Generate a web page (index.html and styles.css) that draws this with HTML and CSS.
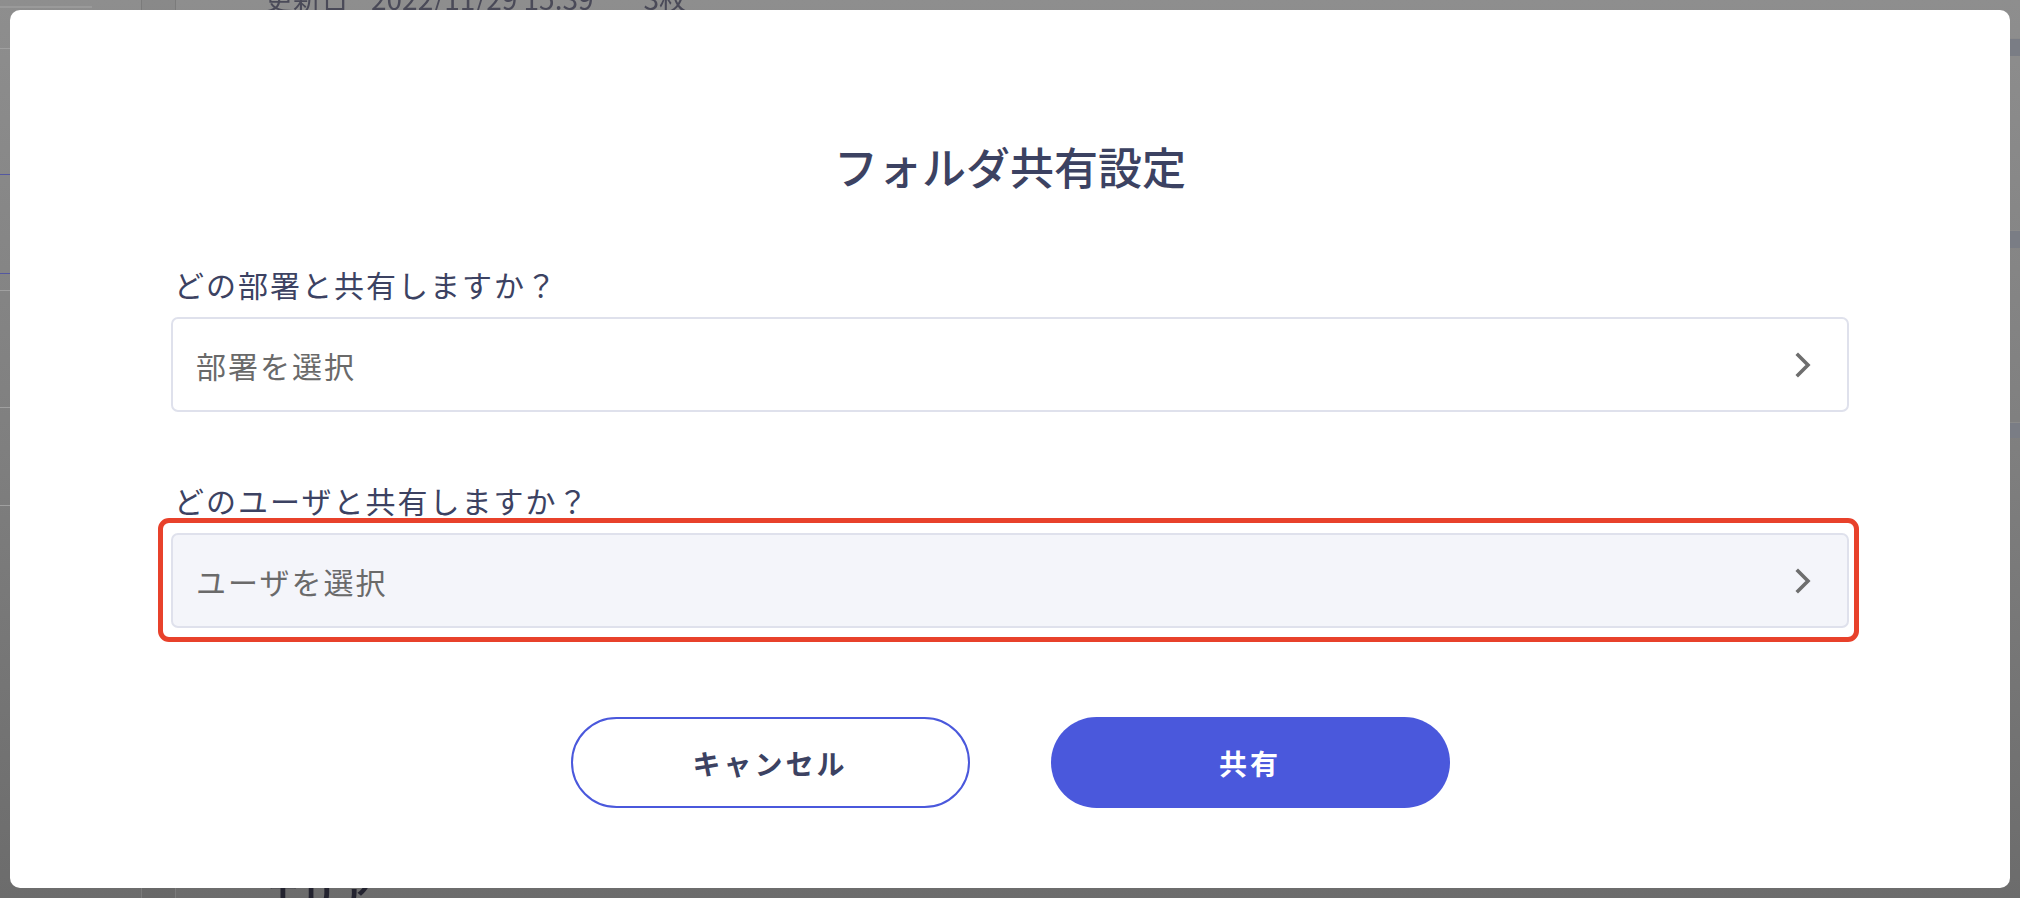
FILE: index.html
```html
<!DOCTYPE html>
<html lang="ja">
<head>
<meta charset="utf-8">
<title>フォルダ共有設定</title>
<link rel="stylesheet" href="styles.css">
</head>
<body>
<div class="page">
  <div class="page-col"></div>
  <div class="page-topline"></div>
  <div class="page-meta"><span>更新日</span><span>2022/11/29 15:39</span><span>3枚</span></div>
  <div class="page-side">
    <span class="side-band b1"></span>
    <span class="side-band b2"></span>
    <span class="side-band b3"></span>
  </div>
  <div class="page-left">
    <span class="left-line l1"></span>
    <span class="left-line l2 blue"></span>
    <span class="left-line l3 blue"></span>
    <span class="left-line l4"></span>
    <span class="left-line l5"></span>
    <span class="left-line l6"></span>
  </div>
  <div class="page-bottom">エリア</div>
</div>

<div class="overlay">
  <div class="modal">
    <h1 class="modal-title">フォルダ共有設定</h1>

    <section class="field field-dept">
      <p class="field-label">どの部署と共有しますか？</p>
      <div class="select">
        <span class="select-text">部署を選択</span>
        <svg class="chevron" viewBox="0 0 16 26" width="16" height="26"><path d="M3 3 L13 13 L3 23" fill="none" stroke="#6e6e6e" stroke-width="3.6" stroke-linecap="square" stroke-linejoin="miter"/></svg>
      </div>
    </section>

    <section class="field field-user">
      <p class="field-label">どのユーザと共有しますか？</p>
      <div class="select-wrap">
        <div class="select select-active">
          <span class="select-text">ユーザを選択</span>
          <svg class="chevron" viewBox="0 0 16 26" width="16" height="26"><path d="M3 3 L13 13 L3 23" fill="none" stroke="#6e6e6e" stroke-width="3.6" stroke-linecap="square" stroke-linejoin="miter"/></svg>
        </div>
        <div class="highlight"></div>
      </div>
    </section>

    <div class="actions">
      <button class="btn btn-outline">キャンセル</button>
      <button class="btn btn-primary">共有</button>
    </div>
  </div>
</div>
</body>
</html>
```
FILE: styles.css
```css
html, body {
  margin: 0;
  padding: 0;
  width: 2020px;
  height: 898px;
  overflow: hidden;
}
body {
  background: linear-gradient(180deg, #8e8e8e 0%, #7f7f7f 50%, #6c6c6c 100%);
  font-family: "Noto Sans CJK JP", "Noto Sans", sans-serif;
}

/* dimmed background page */
.page {
  position: fixed;
  inset: 0;
}
.page-col {
  position: absolute;
  left: 141px;
  top: 0;
  width: 33px;
  height: 898px;
  border-left: 1px solid #7b7b7b;
  border-right: 1px solid #7b7b7b;
  background: rgba(0, 0, 0, 0.03);
}
.page-topline {
  position: absolute;
  left: 0;
  top: 6px;
  width: 92px;
  height: 2px;
  background: #9a9a9a;
}
.page-meta {
  position: absolute;
  left: 265px;
  top: -17px;
  display: flex;
  gap: 22px;
  font-size: 28px;
  line-height: 30px;
  color: #4a4a58;
}
.page-meta span:last-child { margin-left: 28px; }
.page-side {
  position: absolute;
  right: 0;
  top: 0;
  width: 10px;
  height: 898px;
}
.side-band {
  position: absolute;
  left: 0;
  width: 10px;
  background: #7a7d85;
  border-top: 1px solid #8a8a8a;
}
.b1 { top: 38px; height: 17px; }
.b2 { top: 230px; height: 17px; }
.b3 { top: 422px; height: 15px; }
.page-left {
  position: absolute;
  left: 0;
  top: 0;
  width: 10px;
  height: 898px;
}
.left-line {
  position: absolute;
  left: 0;
  width: 10px;
  height: 1px;
  background: #a0a0a0;
}
.left-line.blue { background: #5458a0; }
.l1 { top: 48px; }
.l2 { top: 174px; }
.l3 { top: 273px; }
.l4 { top: 290px; }
.l5 { top: 407px; }
.l6 { top: 505px; }
.page-bottom {
  position: absolute;
  left: 266px;
  top: 874px;
  font-size: 34px;
  line-height: 40px;
  font-weight: 700;
  color: #23232f;
  letter-spacing: 2px;
}

/* modal */
.overlay {
  position: fixed;
  inset: 0;
  padding: 10px;
  box-sizing: border-box;
}
.modal {
  width: 2000px;
  height: 878px;
  box-sizing: border-box;
  background: #ffffff;
  border-radius: 10px;
  padding: 134px 161px 0;
  display: flex;
  flex-direction: column;
}
.modal-title {
  margin: 0;
  text-align: center;
  font-size: 44px;
  line-height: 44px;
  font-weight: 500;
  letter-spacing: 0;
  color: #3c4262;
}
.field-label {
  margin: 0;
  font-size: 30px;
  line-height: 30px;
  font-weight: 400;
  letter-spacing: 2px;
  color: #3c4262;
  padding-left: 3px;
}
.field-dept { margin-top: 81px; }
.field-dept .field-label { margin-bottom: 18px; }
.field-user { margin-top: 73px; }
.field-user .field-label { margin-bottom: 18px; }

.select {
  height: 95px;
  box-sizing: border-box;
  border: 2px solid #dfe1ec;
  border-radius: 7px;
  background: #ffffff;
  display: flex;
  align-items: center;
  justify-content: space-between;
  padding: 0 36px 0 23px;
}
.select-active {
  background: #f4f5fa;
}
.select-text {
  font-size: 30px;
  letter-spacing: 2px;
  color: #6a6a6a;
}
.chevron { display: block; }

.select-wrap {
  position: relative;
}
.highlight {
  position: absolute;
  left: -13px;
  right: -10px;
  top: -15px;
  bottom: -14px;
  border: 5px solid #e8412b;
  border-radius: 11px;
  pointer-events: none;
}

.actions {
  margin-top: 89px;
  display: flex;
  justify-content: center;
  gap: 81px;
}
.btn {
  width: 399px;
  height: 91px;
  box-sizing: border-box;
  border-radius: 46px;
  font-family: "Noto Sans CJK JP", "Noto Sans", sans-serif;
  font-size: 28px;
  font-weight: 600;
  letter-spacing: 3px;
  cursor: pointer;
  padding: 0;
}
.btn-outline {
  background: #ffffff;
  border: 2px solid #4a58dc;
  color: #3c4262;
}
.btn-primary {
  background: #4a58dc;
  border: none;
  color: #ffffff;
}
```
